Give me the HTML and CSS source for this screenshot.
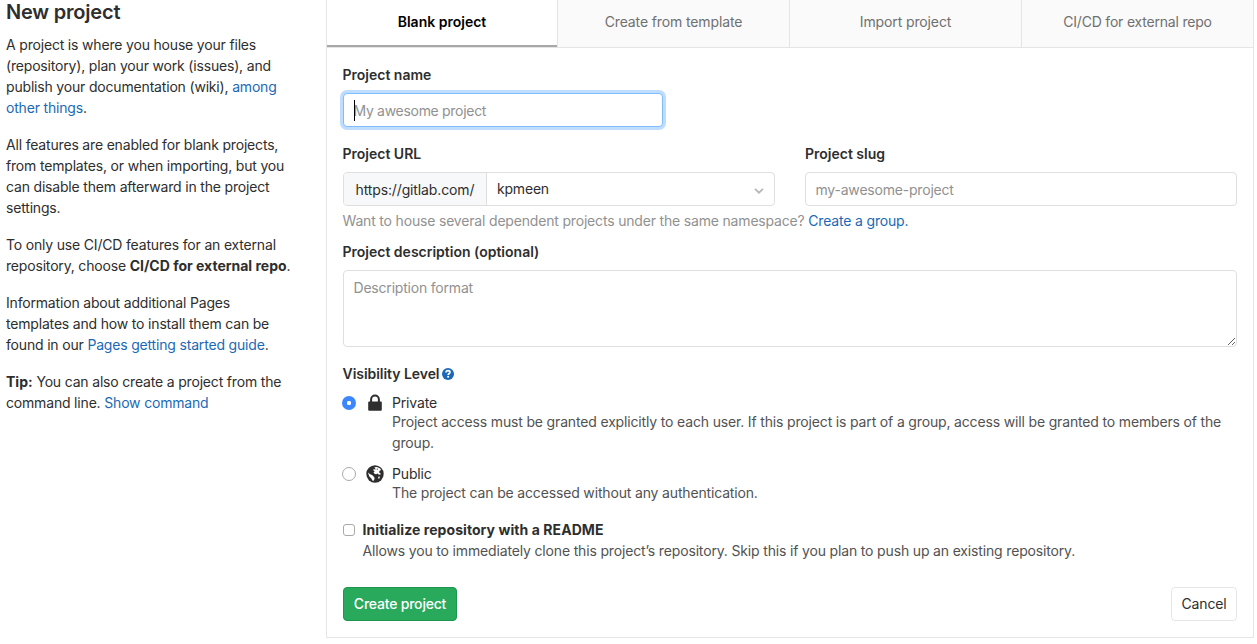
FILE: index.html
```html
<!DOCTYPE html>
<html lang="en">
<head>
<meta charset="utf-8">
<title>New project</title>
<link rel="stylesheet" href="styles.css">
</head>
<body>
<div class="page">
  <aside class="sidebar">
    <h4 class="title">New project</h4>
    <p>A project is where you house your files<br>(repository), plan your work (issues), and<br>publish your documentation (wiki), <a href="#">among<br>other things</a>.</p>
    <p>All features are enabled for blank projects,<br>from templates, or when importing, but you<br>can disable them afterward in the project<br>settings.</p>
    <p>To only use CI/CD features for an external<br>repository, choose <strong>CI/CD for external repo</strong>.</p>
    <p>Information about additional Pages<br>templates and how to install them can be<br>found in our <a href="#">Pages getting started guide</a>.</p>
    <p><strong>Tip:</strong> You can also create a project from the<br>command line. <a href="#">Show command</a></p>
  </aside>
  <main class="panel">
    <nav class="tabs">
      <a class="tab active" href="#">Blank project</a>
      <a class="tab" href="#">Create from template</a>
      <a class="tab" href="#">Import project</a>
      <a class="tab" href="#">CI/CD for external repo</a>
    </nav>
    <form class="form">
      <label class="label" for="name">Project name</label>
      <div class="name-field">
        <input class="control focused" id="name" type="text" placeholder="My awesome project">
        <span class="caret"></span>
      </div>
      <div class="columns">
        <div class="column">
          <label class="label">Project URL</label>
          <div class="url-group">
            <span class="prefix">https://gitlab.com/</span>
            <div class="select"><span class="select-value">kpmeen</span>
              <svg class="chevron" width="10" height="6" viewBox="0 0 10 6"><path d="M1 .8 5 4.7 9 .8" fill="none" stroke="#b8b8b8" stroke-width="1.8"/></svg>
            </div>
          </div>
        </div>
        <div class="column">
          <label class="label" for="slug">Project slug</label>
          <input class="control" id="slug" type="text" placeholder="my-awesome-project">
        </div>
      </div>
      <p class="hint"><span class="hint-text">Want to house several dependent projects under the same namespace?</span> <a href="#">Create a group.</a></p>
      <label class="label" for="description">Project description (optional)</label>
      <textarea class="control description" id="description" placeholder="Description format"></textarea>
      <div class="label visibility">Visibility Level
        <svg width="12" height="12" viewBox="0 0 12 12"><circle cx="6" cy="6" r="6" fill="#1b69b6"/><path d="M4 4.5C4.1 3.1 5 2.7 6 2.7c1.2 0 2 .7 2 1.6 0 1.2-1.8 1.2-1.8 2.7" fill="none" stroke="#fff" stroke-width="1.7"/><path d="M5.2 7.9h1.9v1.7H5.2z" fill="#fff"/></svg>
      </div>
      <div class="option private">
        <input class="radio" type="radio" name="visibility" checked>
        <svg class="icon" width="18" height="18" viewBox="0 0 18 18"><path d="M5.1 8V5.5a3.9 3.9 0 0 1 7.8 0V8" fill="none" stroke="#2e2e2e" stroke-width="2"/><rect x="2.2" y="7.6" width="13.6" height="9.1" rx="1" fill="#2e2e2e"/></svg>
        <div class="option-body">
          <div class="option-title">Private</div>
          <div class="option-text">Project access must be granted explicitly to each user. If this project is part of a group, access will be granted to members of the<br>group.</div>
        </div>
      </div>
      <div class="option public">
        <input class="radio" type="radio" name="visibility">
        <svg class="icon globe" width="18" height="18" viewBox="0 0 18 18"><circle cx="9" cy="9" r="8.7" fill="#2e2e2e"/><path d="M8.4 2.2 11 1.9 13.8 3.2 15.2 5 13.6 5.8 13 7.2 14.6 8.6 14.4 9.8 12.6 9.6 11.4 8.6 10.2 9.3 8.8 8.9 7.5 7.6 8.7 6.2 7.2 5.3 7.4 4.2 9.8 4.4ZM2 7.6 3.8 8.9 6.4 10.2 7.9 11.7 8.6 13 8 15.6 6.6 15.7 5.3 13.4 3.2 11.2ZM12.2 11.8 13.9 11.6 13.4 13.4 12.2 13.6Z" fill="#fff"/><path d="M10.3 4.1 11.9 3.5 11.7 5.1Z" fill="#2e2e2e"/></svg>
        <div class="option-body">
          <div class="option-title">Public</div>
          <div class="option-text">The project can be accessed without any authentication.</div>
        </div>
      </div>
      <div class="readme">
        <input class="checkbox" type="checkbox" id="readme">
        <div>
          <label class="readme-title" for="readme">Initialize repository with a README</label>
          <div class="option-text">Allows you to immediately clone this project’s repository. Skip this if you plan to push up an existing repository.</div>
        </div>
      </div>
      <div class="actions">
        <button class="button create" type="button">Create project</button>
        <button class="button cancel" type="button">Cancel</button>
      </div>
    </form>
  </main>
</div>
</body>
</html>
```
FILE: styles.css
```css
* { box-sizing: border-box; }
body {
  margin: 0;
  background: #fff;
  color: #2e2e2e;
  font: 14px/21px Inter, "Liberation Sans", sans-serif;
  letter-spacing: -0.16px;
  overflow: hidden;
}
a { color: #1b69b6; text-decoration: none; }
strong { font-weight: 700; letter-spacing: 0; }
.page { display: flex; height: 644px; }
.sidebar { width: 326px; flex: none; padding-left: 6px; white-space: nowrap; letter-spacing: -0.18px; }
.sidebar p { margin: 0 0 16px; }
.title { margin: 0 0 10px; font-size: 20px; line-height: 24px; font-weight: 600; letter-spacing: -0.2px; }
.panel { width: 928px; height: 638px; border: 1px solid #e5e5e5; border-top: 0; }
.tabs { display: grid; grid-template-columns: 231px 232px 232px 231px; height: 48px; border-bottom: 1px solid #e5e5e5; }
.tab { height: 47px; padding-top: 11px; text-align: center; color: #707070; background: #fafafa; border-right: 1px solid #e5e5e5; letter-spacing: -0.12px; }
.tab:last-child { border-right: 0; letter-spacing: -0.2px; }
.tab.active { color: #000; font-weight: 600; letter-spacing: 0; background: linear-gradient(#a8a8a8, #a8a8a8) left bottom / 230px 2px no-repeat #fff; }
.form { display: flex; flex-direction: column; padding: 16px 16px 0; }
.label { display: block; height: 21px; margin-left: -0.5px; font-weight: 600; letter-spacing: 0; }
.control {
  display: block;
  width: 100%;
  height: 34px;
  padding: 6px 9.5px;
  border: 1px solid #dfdfdf;
  border-radius: 4px;
  background: #fff;
  color: #2e2e2e;
  font: inherit;
  letter-spacing: -0.2px;
  outline: 0;
}
.control::placeholder { color: #919191; opacity: 1; }
.name-field { position: relative; width: 320px; margin: 8px 0 16px; }
.focused { border-color: #80bdff; box-shadow: 0 0 0 3px #bfdeff; letter-spacing: -0.3px; }
.caret { position: absolute; left: 11px; top: 7px; width: 1px; height: 21px; background: #000; }
.columns { display: grid; grid-template-columns: 432px 432px; column-gap: 30px; }
.column .label { margin-bottom: 8px; }
.column:last-child .label { margin-left: 0; }
.url-group { display: flex; height: 34px; border: 1px solid #dfdfdf; border-radius: 4px; }
.prefix { width: 143px; padding: 6px 0 0 11.5px; background: #f7f8fa; border-right: 1px solid #dfdfdf; border-radius: 3px 0 0 3px; letter-spacing: -0.13px; }
.select { display: flex; flex: 1; justify-content: space-between; padding: 5px 10px 0 10px; letter-spacing: -0.2px; }
.chevron { margin-top: 10px; }
.hint { margin: 4px 0 10px -0.5px; white-space: nowrap; letter-spacing: -0.18px; }
.hint-text { color: #919191; }
.description { height: 77px; margin-top: 8px; margin-bottom: 16px; resize: vertical; }
.visibility { display: flex; align-items: center; gap: 3px; letter-spacing: -0.05px; }
.option { display: flex; align-items: flex-start; }
.private { margin-top: 8px; }
.public { margin-top: 10px; }
.radio { appearance: none; flex: none; width: 14px; height: 14px; margin: 4px 10px 0 -1px; border: 1px solid #a9a9a9; border-radius: 50%; background: #fff; }
.radio:checked { border: 0; background: radial-gradient(circle, #fff 0 1.8px, #3b87fd 2.5px); }
.icon { flex: none; margin: 2px 8px 0 0; }
.option-title { height: 19px; }
.option-text { color: #525252; white-space: nowrap; }
.readme { display: flex; margin-top: 16px; }
.checkbox { appearance: none; width: 12px; height: 12px; margin: 5px 7.5px 0 0; border: 1px solid #a9a9a9; border-radius: 3px; background: #fff; }
.readme-title { display: block; font-weight: 700; letter-spacing: 0.07px; }
.actions { display: flex; justify-content: space-between; margin-top: 26px; }
.button { height: 34px; padding: 0 0 2px; border: 1px solid #e5e5e5; border-radius: 4px; font: inherit; letter-spacing: inherit; background: #fff; color: #2e2e2e; }
.create { width: 114px; background: #28a95c; border-color: #1f9650; color: #fff; font-weight: 500; letter-spacing: -0.2px; }
.cancel { width: 66px; }
```
